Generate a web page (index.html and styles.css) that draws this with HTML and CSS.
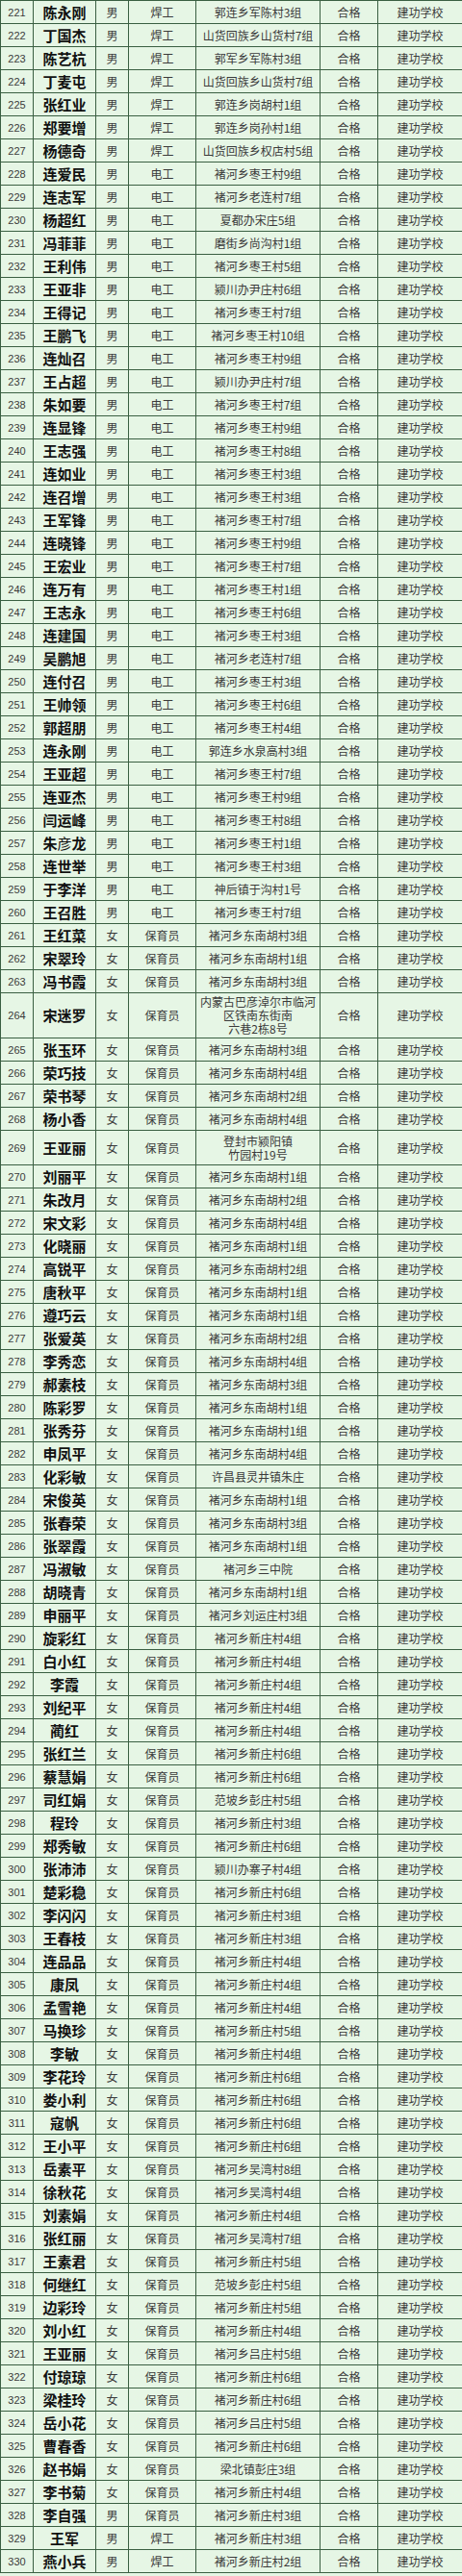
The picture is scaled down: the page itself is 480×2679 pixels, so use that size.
FILE: index.html
```html
<!DOCTYPE html>
<html lang="zh-CN">
<head>
<meta charset="utf-8">
<title>合格名单</title>
<link rel="stylesheet" href="styles.css">
</head>
<body>
<table class="roster">
<colgroup>
<col class="c-no"><col class="c-name"><col class="c-sex"><col class="c-job"><col class="c-addr"><col class="c-res"><col class="c-school">
</colgroup>
<tbody>
<tr><td class="no">221</td><td class="name">陈永刚</td><td>男</td><td>焊工</td><td>郭连乡军陈村3组</td><td>合格</td><td>建功学校</td></tr>
<tr><td class="no">222</td><td class="name">丁国杰</td><td>男</td><td>焊工</td><td>山货回族乡山货村7组</td><td>合格</td><td>建功学校</td></tr>
<tr><td class="no">223</td><td class="name">陈艺杭</td><td>男</td><td>焊工</td><td>郭军乡军陈村3组</td><td>合格</td><td>建功学校</td></tr>
<tr><td class="no">224</td><td class="name">丁麦屯</td><td>男</td><td>焊工</td><td>山货回族乡山货村7组</td><td>合格</td><td>建功学校</td></tr>
<tr><td class="no">225</td><td class="name">张红业</td><td>男</td><td>焊工</td><td>郭连乡岗胡村1组</td><td>合格</td><td>建功学校</td></tr>
<tr><td class="no">226</td><td class="name">郑要增</td><td>男</td><td>焊工</td><td>郭连乡岗孙村1组</td><td>合格</td><td>建功学校</td></tr>
<tr><td class="no">227</td><td class="name">杨德奇</td><td>男</td><td>焊工</td><td>山货回族乡权店村5组</td><td>合格</td><td>建功学校</td></tr>
<tr><td class="no">228</td><td class="name">连爱民</td><td>男</td><td>电工</td><td>褚河乡枣王村9组</td><td>合格</td><td>建功学校</td></tr>
<tr><td class="no">229</td><td class="name">连志军</td><td>男</td><td>电工</td><td>褚河乡老连村7组</td><td>合格</td><td>建功学校</td></tr>
<tr><td class="no">230</td><td class="name">杨超红</td><td>男</td><td>电工</td><td>夏都办宋庄5组</td><td>合格</td><td>建功学校</td></tr>
<tr><td class="no">231</td><td class="name">冯菲菲</td><td>男</td><td>电工</td><td>磨街乡尚沟村1组</td><td>合格</td><td>建功学校</td></tr>
<tr><td class="no">232</td><td class="name">王利伟</td><td>男</td><td>电工</td><td>褚河乡枣王村5组</td><td>合格</td><td>建功学校</td></tr>
<tr><td class="no">233</td><td class="name">王亚非</td><td>男</td><td>电工</td><td>颍川办尹庄村6组</td><td>合格</td><td>建功学校</td></tr>
<tr><td class="no">234</td><td class="name">王得记</td><td>男</td><td>电工</td><td>褚河乡枣王村7组</td><td>合格</td><td>建功学校</td></tr>
<tr><td class="no">235</td><td class="name">王鹏飞</td><td>男</td><td>电工</td><td>褚河乡枣王村10组</td><td>合格</td><td>建功学校</td></tr>
<tr><td class="no">236</td><td class="name">连灿召</td><td>男</td><td>电工</td><td>褚河乡枣王村9组</td><td>合格</td><td>建功学校</td></tr>
<tr><td class="no">237</td><td class="name">王占超</td><td>男</td><td>电工</td><td>颍川办尹庄村7组</td><td>合格</td><td>建功学校</td></tr>
<tr><td class="no">238</td><td class="name">朱如要</td><td>男</td><td>电工</td><td>褚河乡枣王村7组</td><td>合格</td><td>建功学校</td></tr>
<tr><td class="no">239</td><td class="name">连显锋</td><td>男</td><td>电工</td><td>褚河乡枣王村9组</td><td>合格</td><td>建功学校</td></tr>
<tr><td class="no">240</td><td class="name">王志强</td><td>男</td><td>电工</td><td>褚河乡枣王村8组</td><td>合格</td><td>建功学校</td></tr>
<tr><td class="no">241</td><td class="name">连如业</td><td>男</td><td>电工</td><td>褚河乡枣王村3组</td><td>合格</td><td>建功学校</td></tr>
<tr><td class="no">242</td><td class="name">连召增</td><td>男</td><td>电工</td><td>褚河乡枣王村3组</td><td>合格</td><td>建功学校</td></tr>
<tr><td class="no">243</td><td class="name">王军锋</td><td>男</td><td>电工</td><td>褚河乡枣王村7组</td><td>合格</td><td>建功学校</td></tr>
<tr><td class="no">244</td><td class="name">连晓锋</td><td>男</td><td>电工</td><td>褚河乡枣王村9组</td><td>合格</td><td>建功学校</td></tr>
<tr><td class="no">245</td><td class="name">王宏业</td><td>男</td><td>电工</td><td>褚河乡枣王村7组</td><td>合格</td><td>建功学校</td></tr>
<tr><td class="no">246</td><td class="name">连万有</td><td>男</td><td>电工</td><td>褚河乡枣王村1组</td><td>合格</td><td>建功学校</td></tr>
<tr><td class="no">247</td><td class="name">王志永</td><td>男</td><td>电工</td><td>褚河乡枣王村6组</td><td>合格</td><td>建功学校</td></tr>
<tr><td class="no">248</td><td class="name">连建国</td><td>男</td><td>电工</td><td>褚河乡枣王村3组</td><td>合格</td><td>建功学校</td></tr>
<tr><td class="no">249</td><td class="name">吴鹏旭</td><td>男</td><td>电工</td><td>褚河乡老连村7组</td><td>合格</td><td>建功学校</td></tr>
<tr><td class="no">250</td><td class="name">连付召</td><td>男</td><td>电工</td><td>褚河乡枣王村3组</td><td>合格</td><td>建功学校</td></tr>
<tr><td class="no">251</td><td class="name">王帅领</td><td>男</td><td>电工</td><td>褚河乡枣王村6组</td><td>合格</td><td>建功学校</td></tr>
<tr><td class="no">252</td><td class="name">郭超朋</td><td>男</td><td>电工</td><td>褚河乡枣王村4组</td><td>合格</td><td>建功学校</td></tr>
<tr><td class="no">253</td><td class="name">连永刚</td><td>男</td><td>电工</td><td>郭连乡水泉高村3组</td><td>合格</td><td>建功学校</td></tr>
<tr><td class="no">254</td><td class="name">王亚超</td><td>男</td><td>电工</td><td>褚河乡枣王村7组</td><td>合格</td><td>建功学校</td></tr>
<tr><td class="no">255</td><td class="name">连亚杰</td><td>男</td><td>电工</td><td>褚河乡枣王村9组</td><td>合格</td><td>建功学校</td></tr>
<tr><td class="no">256</td><td class="name">闫运峰</td><td>男</td><td>电工</td><td>褚河乡枣王村8组</td><td>合格</td><td>建功学校</td></tr>
<tr><td class="no">257</td><td class="name">朱<span class="light">彦</span>龙</td><td>男</td><td>电工</td><td>褚河乡枣王村1组</td><td>合格</td><td>建功学校</td></tr>
<tr><td class="no">258</td><td class="name">连世举</td><td>男</td><td>电工</td><td>褚河乡枣王村3组</td><td>合格</td><td>建功学校</td></tr>
<tr><td class="no">259</td><td class="name">于李洋</td><td>男</td><td>电工</td><td>神后镇于沟村1号</td><td>合格</td><td>建功学校</td></tr>
<tr><td class="no">260</td><td class="name">王召胜</td><td>男</td><td>电工</td><td>褚河乡枣王村7组</td><td>合格</td><td>建功学校</td></tr>
<tr><td class="no">261</td><td class="name">王红菜</td><td>女</td><td>保育员</td><td>褚河乡东南胡村3组</td><td>合格</td><td>建功学校</td></tr>
<tr><td class="no">262</td><td class="name">宋翠玲</td><td>女</td><td>保育员</td><td>褚河乡东南胡村1组</td><td>合格</td><td>建功学校</td></tr>
<tr><td class="no">263</td><td class="name">冯书霞</td><td>女</td><td>保育员</td><td>褚河乡东南胡村3组</td><td>合格</td><td>建功学校</td></tr>
<tr class="tall3"><td class="no">264</td><td class="name">宋迷罗</td><td>女</td><td>保育员</td><td class="multi">内蒙古巴彦淖尔市临河<br>区铁南东街南<br>六巷2栋8号</td><td>合格</td><td>建功学校</td></tr>
<tr><td class="no">265</td><td class="name">张玉环</td><td>女</td><td>保育员</td><td>褚河乡东南胡村3组</td><td>合格</td><td>建功学校</td></tr>
<tr><td class="no">266</td><td class="name">荣巧技</td><td>女</td><td>保育员</td><td>褚河乡东南胡村4组</td><td>合格</td><td>建功学校</td></tr>
<tr><td class="no">267</td><td class="name">荣书琴</td><td>女</td><td>保育员</td><td>褚河乡东南胡村2组</td><td>合格</td><td>建功学校</td></tr>
<tr><td class="no">268</td><td class="name">杨小香</td><td>女</td><td>保育员</td><td>褚河乡东南胡村4组</td><td>合格</td><td>建功学校</td></tr>
<tr class="tall2"><td class="no">269</td><td class="name">王亚丽</td><td>女</td><td>保育员</td><td class="multi">登封市颍阳镇<br>竹园村19号</td><td>合格</td><td>建功学校</td></tr>
<tr><td class="no">270</td><td class="name">刘丽平</td><td>女</td><td>保育员</td><td>褚河乡东南胡村1组</td><td>合格</td><td>建功学校</td></tr>
<tr><td class="no">271</td><td class="name">朱改月</td><td>女</td><td>保育员</td><td>褚河乡东南胡村2组</td><td>合格</td><td>建功学校</td></tr>
<tr><td class="no">272</td><td class="name">宋文彩</td><td>女</td><td>保育员</td><td>褚河乡东南胡村4组</td><td>合格</td><td>建功学校</td></tr>
<tr><td class="no">273</td><td class="name">化晓丽</td><td>女</td><td>保育员</td><td>褚河乡东南胡村1组</td><td>合格</td><td>建功学校</td></tr>
<tr><td class="no">274</td><td class="name">高锐平</td><td>女</td><td>保育员</td><td>褚河乡东南胡村2组</td><td>合格</td><td>建功学校</td></tr>
<tr><td class="no">275</td><td class="name">唐秋平</td><td>女</td><td>保育员</td><td>褚河乡东南胡村1组</td><td>合格</td><td>建功学校</td></tr>
<tr><td class="no">276</td><td class="name">遵巧云</td><td>女</td><td>保育员</td><td>褚河乡东南胡村1组</td><td>合格</td><td>建功学校</td></tr>
<tr><td class="no">277</td><td class="name">张爱英</td><td>女</td><td>保育员</td><td>褚河乡东南胡村2组</td><td>合格</td><td>建功学校</td></tr>
<tr><td class="no">278</td><td class="name">李秀恋</td><td>女</td><td>保育员</td><td>褚河乡东南胡村4组</td><td>合格</td><td>建功学校</td></tr>
<tr><td class="no">279</td><td class="name">郝素枝</td><td>女</td><td>保育员</td><td>褚河乡东南胡村3组</td><td>合格</td><td>建功学校</td></tr>
<tr><td class="no">280</td><td class="name">陈彩罗</td><td>女</td><td>保育员</td><td>褚河乡东南胡村1组</td><td>合格</td><td>建功学校</td></tr>
<tr><td class="no">281</td><td class="name">张秀芬</td><td>女</td><td>保育员</td><td>褚河乡东南胡村1组</td><td>合格</td><td>建功学校</td></tr>
<tr><td class="no">282</td><td class="name">申凤平</td><td>女</td><td>保育员</td><td>褚河乡东南胡村4组</td><td>合格</td><td>建功学校</td></tr>
<tr><td class="no">283</td><td class="name">化彩敏</td><td>女</td><td>保育员</td><td>许昌县灵井镇朱庄</td><td>合格</td><td>建功学校</td></tr>
<tr><td class="no">284</td><td class="name">宋俊英</td><td>女</td><td>保育员</td><td>褚河乡东南胡村1组</td><td>合格</td><td>建功学校</td></tr>
<tr><td class="no">285</td><td class="name">张春荣</td><td>女</td><td>保育员</td><td>褚河乡东南胡村3组</td><td>合格</td><td>建功学校</td></tr>
<tr><td class="no">286</td><td class="name">张翠霞</td><td>女</td><td>保育员</td><td>褚河乡东南胡村1组</td><td>合格</td><td>建功学校</td></tr>
<tr><td class="no">287</td><td class="name">冯淑敏</td><td>女</td><td>保育员</td><td>褚河乡三中院</td><td>合格</td><td>建功学校</td></tr>
<tr><td class="no">288</td><td class="name">胡晓青</td><td>女</td><td>保育员</td><td>褚河乡东南胡村1组</td><td>合格</td><td>建功学校</td></tr>
<tr><td class="no">289</td><td class="name">申丽平</td><td>女</td><td>保育员</td><td>褚河乡刘运庄村3组</td><td>合格</td><td>建功学校</td></tr>
<tr><td class="no">290</td><td class="name">旋彩红</td><td>女</td><td>保育员</td><td>褚河乡新庄村4组</td><td>合格</td><td>建功学校</td></tr>
<tr><td class="no">291</td><td class="name">白小红</td><td>女</td><td>保育员</td><td>褚河乡新庄村4组</td><td>合格</td><td>建功学校</td></tr>
<tr><td class="no">292</td><td class="name">李霞</td><td>女</td><td>保育员</td><td>褚河乡新庄村4组</td><td>合格</td><td>建功学校</td></tr>
<tr><td class="no">293</td><td class="name">刘纪平</td><td>女</td><td>保育员</td><td>褚河乡新庄村4组</td><td>合格</td><td>建功学校</td></tr>
<tr><td class="no">294</td><td class="name">蔺红</td><td>女</td><td>保育员</td><td>褚河乡新庄村4组</td><td>合格</td><td>建功学校</td></tr>
<tr><td class="no">295</td><td class="name">张红兰</td><td>女</td><td>保育员</td><td>褚河乡新庄村6组</td><td>合格</td><td>建功学校</td></tr>
<tr><td class="no">296</td><td class="name">蔡慧娟</td><td>女</td><td>保育员</td><td>褚河乡新庄村6组</td><td>合格</td><td>建功学校</td></tr>
<tr><td class="no">297</td><td class="name">司红娟</td><td>女</td><td>保育员</td><td>范坡乡彭庄村5组</td><td>合格</td><td>建功学校</td></tr>
<tr><td class="no">298</td><td class="name">程玲</td><td>女</td><td>保育员</td><td>褚河乡新庄村3组</td><td>合格</td><td>建功学校</td></tr>
<tr><td class="no">299</td><td class="name">郑秀敏</td><td>女</td><td>保育员</td><td>褚河乡新庄村6组</td><td>合格</td><td>建功学校</td></tr>
<tr><td class="no">300</td><td class="name">张沛沛</td><td>女</td><td>保育员</td><td>颍川办寨子村4组</td><td>合格</td><td>建功学校</td></tr>
<tr><td class="no">301</td><td class="name">楚彩稳</td><td>女</td><td>保育员</td><td>褚河乡新庄村6组</td><td>合格</td><td>建功学校</td></tr>
<tr><td class="no">302</td><td class="name">李闪闪</td><td>女</td><td>保育员</td><td>褚河乡新庄村3组</td><td>合格</td><td>建功学校</td></tr>
<tr><td class="no">303</td><td class="name">王春枝</td><td>女</td><td>保育员</td><td>褚河乡新庄村3组</td><td>合格</td><td>建功学校</td></tr>
<tr><td class="no">304</td><td class="name">连品品</td><td>女</td><td>保育员</td><td>褚河乡新庄村4组</td><td>合格</td><td>建功学校</td></tr>
<tr><td class="no">305</td><td class="name">康凤</td><td>女</td><td>保育员</td><td>褚河乡新庄村4组</td><td>合格</td><td>建功学校</td></tr>
<tr><td class="no">306</td><td class="name">孟雪艳</td><td>女</td><td>保育员</td><td>褚河乡新庄村4组</td><td>合格</td><td>建功学校</td></tr>
<tr><td class="no">307</td><td class="name">马换珍</td><td>女</td><td>保育员</td><td>褚河乡新庄村5组</td><td>合格</td><td>建功学校</td></tr>
<tr><td class="no">308</td><td class="name">李敏</td><td>女</td><td>保育员</td><td>褚河乡新庄村4组</td><td>合格</td><td>建功学校</td></tr>
<tr><td class="no">309</td><td class="name">李花玲</td><td>女</td><td>保育员</td><td>褚河乡新庄村6组</td><td>合格</td><td>建功学校</td></tr>
<tr><td class="no">310</td><td class="name">娄小利</td><td>女</td><td>保育员</td><td>褚河乡新庄村6组</td><td>合格</td><td>建功学校</td></tr>
<tr><td class="no">311</td><td class="name">寇帆</td><td>女</td><td>保育员</td><td>褚河乡新庄村6组</td><td>合格</td><td>建功学校</td></tr>
<tr><td class="no">312</td><td class="name">王小平</td><td>女</td><td>保育员</td><td>褚河乡新庄村6组</td><td>合格</td><td>建功学校</td></tr>
<tr><td class="no">313</td><td class="name">岳素平</td><td>女</td><td>保育员</td><td>褚河乡吴湾村8组</td><td>合格</td><td>建功学校</td></tr>
<tr><td class="no">314</td><td class="name">徐秋花</td><td>女</td><td>保育员</td><td>褚河乡吴湾村4组</td><td>合格</td><td>建功学校</td></tr>
<tr><td class="no">315</td><td class="name">刘素娟</td><td>女</td><td>保育员</td><td>褚河乡新庄村4组</td><td>合格</td><td>建功学校</td></tr>
<tr><td class="no">316</td><td class="name">张红丽</td><td>女</td><td>保育员</td><td>褚河乡吴湾村7组</td><td>合格</td><td>建功学校</td></tr>
<tr><td class="no">317</td><td class="name">王素君</td><td>女</td><td>保育员</td><td>褚河乡新庄村5组</td><td>合格</td><td>建功学校</td></tr>
<tr><td class="no">318</td><td class="name">何继红</td><td>女</td><td>保育员</td><td>范坡乡彭庄村5组</td><td>合格</td><td>建功学校</td></tr>
<tr><td class="no">319</td><td class="name">边彩玲</td><td>女</td><td>保育员</td><td>褚河乡新庄村5组</td><td>合格</td><td>建功学校</td></tr>
<tr><td class="no">320</td><td class="name">刘小红</td><td>女</td><td>保育员</td><td>褚河乡新庄村4组</td><td>合格</td><td>建功学校</td></tr>
<tr><td class="no">321</td><td class="name">王亚丽</td><td>女</td><td>保育员</td><td>褚河乡吕庄村5组</td><td>合格</td><td>建功学校</td></tr>
<tr><td class="no">322</td><td class="name">付琼琼</td><td>女</td><td>保育员</td><td>褚河乡新庄村6组</td><td>合格</td><td>建功学校</td></tr>
<tr><td class="no">323</td><td class="name">梁桂玲</td><td>女</td><td>保育员</td><td>褚河乡新庄村6组</td><td>合格</td><td>建功学校</td></tr>
<tr><td class="no">324</td><td class="name">岳小花</td><td>女</td><td>保育员</td><td>褚河乡吕庄村5组</td><td>合格</td><td>建功学校</td></tr>
<tr><td class="no">325</td><td class="name">曹春香</td><td>女</td><td>保育员</td><td>褚河乡新庄村6组</td><td>合格</td><td>建功学校</td></tr>
<tr><td class="no">326</td><td class="name">赵书娟</td><td>女</td><td>保育员</td><td>梁北镇彭庄3组</td><td>合格</td><td>建功学校</td></tr>
<tr><td class="no">327</td><td class="name">李书菊</td><td>女</td><td>保育员</td><td>褚河乡新庄村4组</td><td>合格</td><td>建功学校</td></tr>
<tr><td class="no">328</td><td class="name">李自强</td><td>男</td><td>保育员</td><td>褚河乡新庄村3组</td><td>合格</td><td>建功学校</td></tr>
<tr><td class="no">329</td><td class="name">王军</td><td>男</td><td>焊工</td><td>褚河乡新庄村3组</td><td>合格</td><td>建功学校</td></tr>
<tr><td class="no">330</td><td class="name">燕小兵</td><td>男</td><td>焊工</td><td>褚河乡新庄村2组</td><td>合格</td><td>建功学校</td></tr>
</tbody>
</table>
</body>
</html>
```
FILE: styles.css
```css
html, body {
  margin: 0;
  padding: 0;
  background: #e6f6e5;
}

.roster {
  width: 480px;
  table-layout: fixed;
  border-collapse: collapse;
  background: #e6f6e5;
  font-family: "Noto Sans CJK SC", "Liberation Sans", sans-serif;
  font-size: 12px;
  color: #3a3a3a;
}

.c-no { width: 34px; }
.c-name { width: 65px; }
.c-sex { width: 34px; }
.c-job { width: 70px; }
.c-addr { width: 129px; }
.c-res { width: 60px; }
.c-school { width: 88px; }

.roster td {
  border: 1px solid #3a5f42;
  height: 23px;
  padding: 0;
  text-align: center;
  vertical-align: middle;
  line-height: 14px;
  white-space: nowrap;
  overflow: hidden;
}

.roster td.no {
  font-family: "Liberation Sans", Arial, sans-serif;
  font-size: 11px;
  color: #3a3a3a;
}

.roster td.name {
  font-size: 15px;
  font-weight: 700;
  color: #111;
}

.roster .light {
  font-weight: 400;
}

.roster tr.tall3 td {
  height: 46px;
}

.roster tr.tall2 td {
  height: 35px;
}
```
